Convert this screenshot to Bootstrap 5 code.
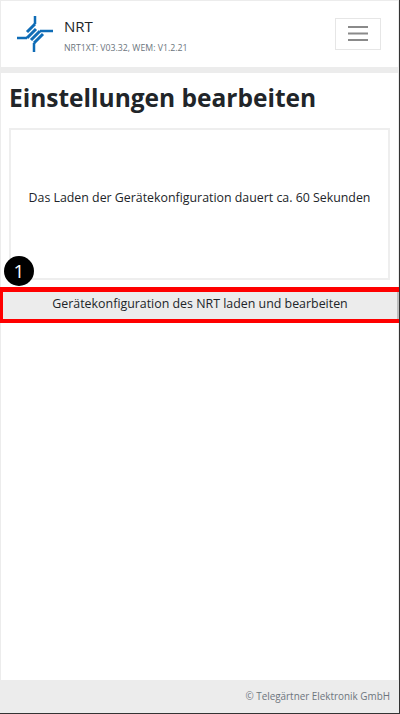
<!DOCTYPE html>
<html lang="de">
<head>
    <meta charset="UTF-8">
    <meta name="viewport" content="width=device-width, initial-scale=1.0">
    <title>NRT - Einstellungen</title>
    <link href="https://cdn.jsdelivr.net/npm/bootstrap@5.3.0/dist/css/bootstrap.min.css" rel="stylesheet">
    <style>
        html, body { height: 714px; overflow: hidden; }
        body { background: #ececec; font-family: "Open Sans", "Noto Sans", sans-serif; color: #212529; }
        .app-shell { height: 714px; padding: 1px 1px 0 1px; border-right: 1px solid #333; border-bottom: 1px solid #333; }
        .app-nav { height: 66px; padding: 0 17px 0 14px; }
        .app-brand { margin-left: 9px; }
        .app-brand-name { font-size: 15px; line-height: 20px; margin-top: 2px; }
        .app-version { font-size: 8.75px; line-height: 12px; color: #6c757d; margin-top: 6px; }
        .app-toggler { width: 46px; height: 32px; border: 1px solid #e6e6e6; background: #fff; padding: 0; margin-top: -1px; }
        .app-main { height: 607px; margin-top: 6px; padding: 8px 8px 0 8px; }
        .app-title { font-size: 24.5px; font-weight: 700; line-height: 34px; margin: 0 0 13px 0; }
        .app-info { height: 152px; border: 2px solid #eeeeee; font-size: 12.36px; padding-bottom: 11px; }
        .app-action-wrap { margin: 7px -9px 0 -9px; position: relative; border: 0 solid #f00; border-width: 5px 0 4px 3px; }
        .app-action { height: 27px; border: 0; border-right: 2px solid #bdbdbd; background: #ececec; font-size: 12.4px; color: #212529; border-radius: 0; width: 100%; padding: 0 0 2px 0; }
        .app-marker { position: absolute; left: 1px; top: -36px; width: 30px; height: 30px; border-radius: 50%; background: #000; color: #fff; font-size: 19px; font-weight: 500; }
        .app-footer { height: 33px; padding-right: 8px; font-size: 9.9px; color: #6c757d; }
    </style>
</head>
<body>
    <div class="app-shell d-flex flex-column">
        <nav class="app-nav bg-white d-flex align-items-center justify-content-between">
            <div class="d-flex align-items-center">
                <svg width="40" height="40" viewBox="0 0 40 40" fill="none" stroke="#0f6cb6">
                    <path stroke-width="2.5" d="M20 2V10M2 24H12M38 17H25M19 38V29"/>
                    <path stroke-width="3" d="M20 10L12 18M12 24L21 15M25 17L16 26M19 29L28 20"/>
                </svg>
                <div class="app-brand">
                    <div class="app-brand-name">NRT</div>
                    <div class="app-version">NRT1XT: V03.32, WEM: V1.2.21</div>
                </div>
            </div>
            <button class="app-toggler d-flex flex-column align-items-center justify-content-center" type="button" aria-label="Menü">
                <svg width="20" height="15" viewBox="0 0 20 15" stroke="#8a8a8a" stroke-width="2"><path d="M0 1H20M0 7.5H20M0 14H20"/></svg>
            </button>
        </nav>
        <main class="app-main bg-white">
            <h1 class="app-title">Einstellungen bearbeiten</h1>
            <div class="app-info d-flex align-items-center justify-content-center text-center">Das Laden der Gerätekonfiguration dauert ca. 60 Sekunden</div>
            <div class="app-action-wrap">
                <div class="app-marker d-flex align-items-center justify-content-center">1</div>
                <button class="btn app-action" type="button">Gerätekonfiguration des NRT laden und bearbeiten</button>
            </div>
        </main>
        <footer class="app-footer d-flex align-items-center justify-content-end">© Telegärtner Elektronik GmbH</footer>
    </div>
</body>
</html>
